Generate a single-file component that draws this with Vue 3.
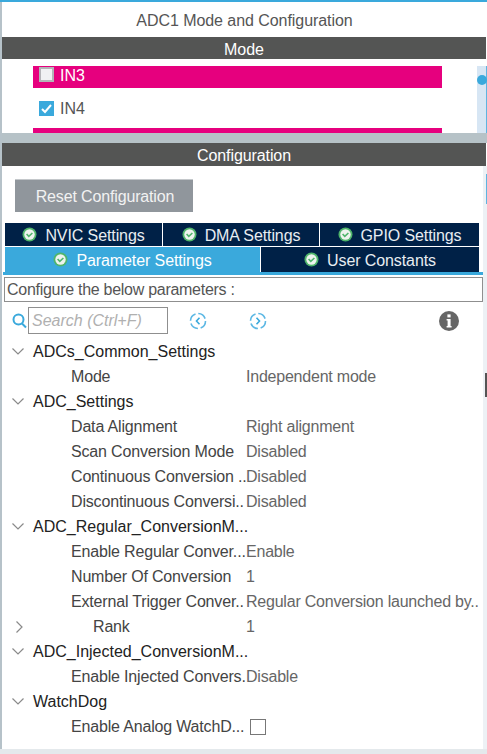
<script setup>
const topTabs = ["NVIC Settings", "DMA Settings", "GPIO Settings"];
const bottomTabs = [
  { label: "Parameter Settings", active: true },
  { label: "User Constants", active: false },
];

const rows = [
  { type: "group", label: "ADCs_Common_Settings" },
  { label: "Mode", value: "Independent mode" },
  { type: "group", label: "ADC_Settings" },
  { label: "Data Alignment", value: "Right alignment" },
  { label: "Scan Conversion Mode", value: "Disabled" },
  { label: "Continuous Conversion ..", value: "Disabled" },
  { label: "Discontinuous Conversi..", value: "Disabled" },
  { type: "group", label: "ADC_Regular_ConversionM..." },
  { label: "Enable Regular Conver...", value: "Enable" },
  { label: "Number Of Conversion", value: "1" },
  { label: "External Trigger Conver..", value: "Regular Conversion launched by.." },
  { type: "rank", label: "Rank", value: "1" },
  { type: "group", label: "ADC_Injected_ConversionM..." },
  { label: "Enable Injected Convers.", value: "Disable" },
  { type: "group", label: "WatchDog" },
  { label: "Enable Analog WatchD...", check: true },
];
</script>

<template>
  <div class="page">
    <h1 class="title">ADC1 Mode and Configuration</h1>
    <div class="bar mode-bar">Mode</div>

    <section class="mode">
      <div class="channel pink">
        <span class="box"></span>
        <span class="in3">IN3</span>
      </div>
      <div class="channel plain">
        <span class="box checked">
          <svg width="15" height="15" viewBox="0 0 15 15">
            <path d="M3 8l3 3 6-7" fill="none" stroke="#fff" stroke-width="2" />
          </svg>
        </span>
        <span class="in4">IN4</span>
      </div>
      <div class="channel pink"></div>
      <div class="scroll"><span class="thumb"></span></div>
    </section>

    <div class="splitter"></div>
    <div class="bar config-bar">Configuration</div>

    <section class="config">
      <button class="reset" type="button">Reset Configuration</button>

      <div class="tabs top-tabs">
        <div v-for="tab in topTabs" :key="tab" class="tab">
          <svg class="ok" width="15" height="15" viewBox="0 0 15 15">
            <circle cx="7.5" cy="7.5" r="7" fill="#4fb56b" />
            <circle cx="7.5" cy="7.5" r="5.2" fill="#eef3ee" />
            <path d="M4.6 7l2.2 2.4 3.6-3.4" fill="none" stroke="#4fb56b" stroke-width="1.6" />
          </svg>
          <span>{{ tab }}</span>
        </div>
      </div>
      <div class="tabs bottom-tabs">
        <div v-for="tab in bottomTabs" :key="tab.label" class="tab" :class="{ active: tab.active }">
          <svg class="ok" width="15" height="15" viewBox="0 0 15 15">
            <circle cx="7.5" cy="7.5" r="7" fill="#4fb56b" />
            <circle cx="7.5" cy="7.5" r="5.2" fill="#eef3ee" />
            <path d="M4.6 7l2.2 2.4 3.6-3.4" fill="none" stroke="#4fb56b" stroke-width="1.6" />
          </svg>
          <span>{{ tab.label }}</span>
        </div>
      </div>
      <div class="tab-line"></div>

      <div class="hint">Configure the below parameters :</div>

      <div class="tools">
        <svg class="lens" width="15" height="17" viewBox="0 0 15 17">
          <circle cx="6.5" cy="7.5" r="5" fill="none" stroke="#3aa9dc" stroke-width="2" />
          <path d="M10 11.5l4 4" stroke="#3aa9dc" stroke-width="2" />
        </svg>
        <div class="search">Search (Ctrl+F)</div>
        <svg class="nav" width="18" height="18" viewBox="0 0 18 18">
          <circle cx="9" cy="9" r="7.5" fill="none" stroke="#5db8e4" stroke-width="1.6" stroke-dasharray="9 2.8" />
          <path d="M10.5 5.8L7.5 9l3 3.2" fill="none" stroke="#3aa9dc" stroke-width="1.6" />
        </svg>
        <svg class="nav next" width="18" height="18" viewBox="0 0 18 18">
          <circle cx="9" cy="9" r="7.5" fill="none" stroke="#5db8e4" stroke-width="1.6" stroke-dasharray="9 2.8" />
          <path d="M7.5 5.8l3 3.2-3 3.2" fill="none" stroke="#3aa9dc" stroke-width="1.6" />
        </svg>
        <svg class="info" width="20" height="20" viewBox="0 0 20 20">
          <circle cx="10" cy="10" r="10" fill="#666" />
          <rect x="8.4" y="3.4" width="3.2" height="3" fill="#fff" />
          <path d="M7.6 8h4v7h1v1.6H7.6V15h1V9.6h-1z" fill="#fff" />
        </svg>
      </div>

      <div class="tree">
        <div v-for="row in rows" :key="row.label" class="row" :class="row.type">
          <svg v-if="row.type === 'group'" class="arrow" width="12" height="12" viewBox="0 0 12 12">
            <path d="M0.5 3.5L6 9l5.5-5.5" fill="none" stroke="#8a8a8a" stroke-width="1.2" />
          </svg>
          <svg v-if="row.type === 'rank'" class="arrow" width="12" height="12" viewBox="0 0 12 12">
            <path d="M3.5 0.5L9 6l-5.5 5.5" fill="none" stroke="#8a8a8a" stroke-width="1.2" />
          </svg>
          <span class="name">{{ row.label }}</span>
          <span v-if="row.value" class="value">{{ row.value }}</span>
          <span v-if="row.check" class="tick"></span>
        </div>
      </div>
    </section>

    <div class="edge"><span class="edge-blue"></span><span class="edge-thumb"></span></div>
  </div>
</template>

<style>
html,
body {
  margin: 0;
  background: #fff;
}
</style>

<style scoped>
.page {
  position: relative;
  box-sizing: border-box;
  width: 487px;
  height: 754px;
  overflow: hidden;
  padding-left: 2px;
  border-top: 2px solid #3aa9dc;
  background: #fff;
  font-family: "Liberation Sans", Arial, sans-serif;
  font-size: 16px;
  color: #555;
}

.page::before {
  content: "";
  position: absolute;
  left: 0;
  top: 0;
  bottom: 0;
  width: 2px;
  background: #b6c2c9;
}

.page::after {
  content: "";
  position: absolute;
  left: 0;
  right: 0;
  bottom: 0;
  height: 5px;
  background: #e4e9ec;
}

.title {
  height: 35px;
  margin: 0;
  font-size: 16px;
  font-weight: normal;
  line-height: 38px;
  letter-spacing: -0.06px;
  text-align: center;
}

.bar {
  background: #545554;
  color: #fff;
  text-align: center;
  margin-right: -1px;
  width: 484px;
}

.mode-bar {
  height: 22px;
  line-height: 25px;
}

.mode {
  position: relative;
  height: 74px;
  padding: 7px 0 0 31px;
  box-sizing: border-box;
  overflow: hidden;
}

.channel {
  display: flex;
  align-items: center;
  gap: 6px;
  width: 409px;
  padding-left: 6px;
  box-sizing: border-box;
}

.pink {
  height: 22px;
  background: #e6007e;
  color: #fff;
}

.plain {
  height: 40px;
}

.in3 {
  margin-top: -3px;
}

.in4 {
  margin-top: 2px;
}

.box {
  width: 15px;
  height: 15px;
  box-sizing: border-box;
  border: 2px solid #b4b4b8;
  background: #f0f1f3;
}

.pink .box {
  margin-top: -5px;
}

.checked {
  border: 0;
  background: #3aa9dc;
}

.checked svg {
  display: block;
}

.scroll {
  position: absolute;
  top: 7px;
  right: 0;
  bottom: 0;
  width: 10px;
  background: #d7e6f4;
  border-right: 1px solid #5fb4e0;
  box-sizing: border-box;
}

.thumb {
  position: absolute;
  top: 9px;
  left: 0;
  width: 10px;
  height: 10px;
  border-radius: 50%;
  background: #3aa9dc;
}

.splitter {
  height: 10px;
  margin-left: -2px;
  background: #b6c2c7;
}

.config-bar {
  height: 23px;
  line-height: 26px;
  letter-spacing: -0.1px;
}

.config {
  padding-top: 13px;
}

.reset {
  display: block;
  width: 178px;
  height: 33px;
  margin: 0 0 11px 13px;
  padding: 2px 0 0 2px;
  border: 0;
  border-top: 1px solid #c4c8cb;
  background: #90969c;
  color: #f2f2f2;
  font: inherit;
  letter-spacing: -0.15px;
}

.tabs {
  display: flex;
  gap: 1px;
  margin-left: 3px;
  width: 474px;
}

.top-tabs {
  height: 23px;
  margin-bottom: 1px;
}

.bottom-tabs {
  height: 25px;
}

.tab {
  flex: 1 1 0;
  display: flex;
  align-items: center;
  justify-content: center;
  gap: 8px;
  background: #002147;
  color: #e8edf2;
  letter-spacing: -0.1px;
}

.tab span {
  padding-top: 2px;
}

.top-tabs .tab:nth-child(1) {
  flex: 0 0 157px;
}

.top-tabs .tab:nth-child(2) {
  flex: 0 0 156px;
}

.bottom-tabs .tab:first-child {
  flex: 0 0 255px;
}

.tab.active {
  background: #3aa9dc;
  color: #fff;
}

.ok {
  flex: none;
}

.tab-line {
  height: 3px;
  margin-left: 1px;
  width: 482px;
  background: #3aa9dc;
}

.hint {
  box-sizing: border-box;
  width: 479px;
  height: 25px;
  margin: 2px 0 0 2px;
  padding-left: 2px;
  border: 1px solid #8f8f8f;
  line-height: 24px;
  letter-spacing: -0.28px;
}

.tools {
  display: flex;
  align-items: center;
  height: 27px;
  margin-top: 5px;
  padding-left: 10px;
}

.lens {
  margin-right: 1px;
}

.search {
  box-sizing: border-box;
  width: 140px;
  height: 27px;
  padding-left: 3px;
  border: 1px solid #8f8f8f;
  color: #b0b0b0;
  font-style: italic;
  line-height: 26px;
}

.nav {
  margin-left: 21px;
}

.nav.next {
  margin-left: 42px;
}

.info {
  margin-left: auto;
  margin-right: 28px;
}

.tree {
  margin-top: 5px;
}

.row {
  display: flex;
  align-items: center;
  height: 25px;
  padding-left: 69px;
}

.row.group,
.row.rank {
  position: relative;
}

.row.group {
  padding-left: 31px;
  color: #222;
}

.row.rank {
  padding-left: 91px;
}

.arrow {
  position: absolute;
  left: 10px;
  top: 6px;
}

.rank .arrow {
  top: 7px;
  left: 11px;
}

.name {
  width: 175px;
  flex: none;
  white-space: nowrap;
  letter-spacing: -0.17px;
  color: #444;
}

.group .name {
  width: auto;
  letter-spacing: 0;
  color: #222;
}

.rank .name {
  width: 153px;
}

.value {
  color: #666;
  white-space: nowrap;
  letter-spacing: -0.22px;
}

.tick {
  box-sizing: border-box;
  width: 16px;
  height: 16px;
  margin-left: 4px;
  border: 1.5px solid #777;
}

.edge {
  position: absolute;
  top: 164px;
  right: 0;
  bottom: 0;
  width: 4px;
  background: #edf1f5;
}

.edge-blue {
  position: absolute;
  top: 8px;
  right: 0;
  width: 1px;
  height: 30px;
  background: #5fb4e0;
}

.edge-thumb {
  position: absolute;
  top: 207px;
  right: 0;
  width: 2px;
  height: 24px;
  background: #555;
}
</style>
